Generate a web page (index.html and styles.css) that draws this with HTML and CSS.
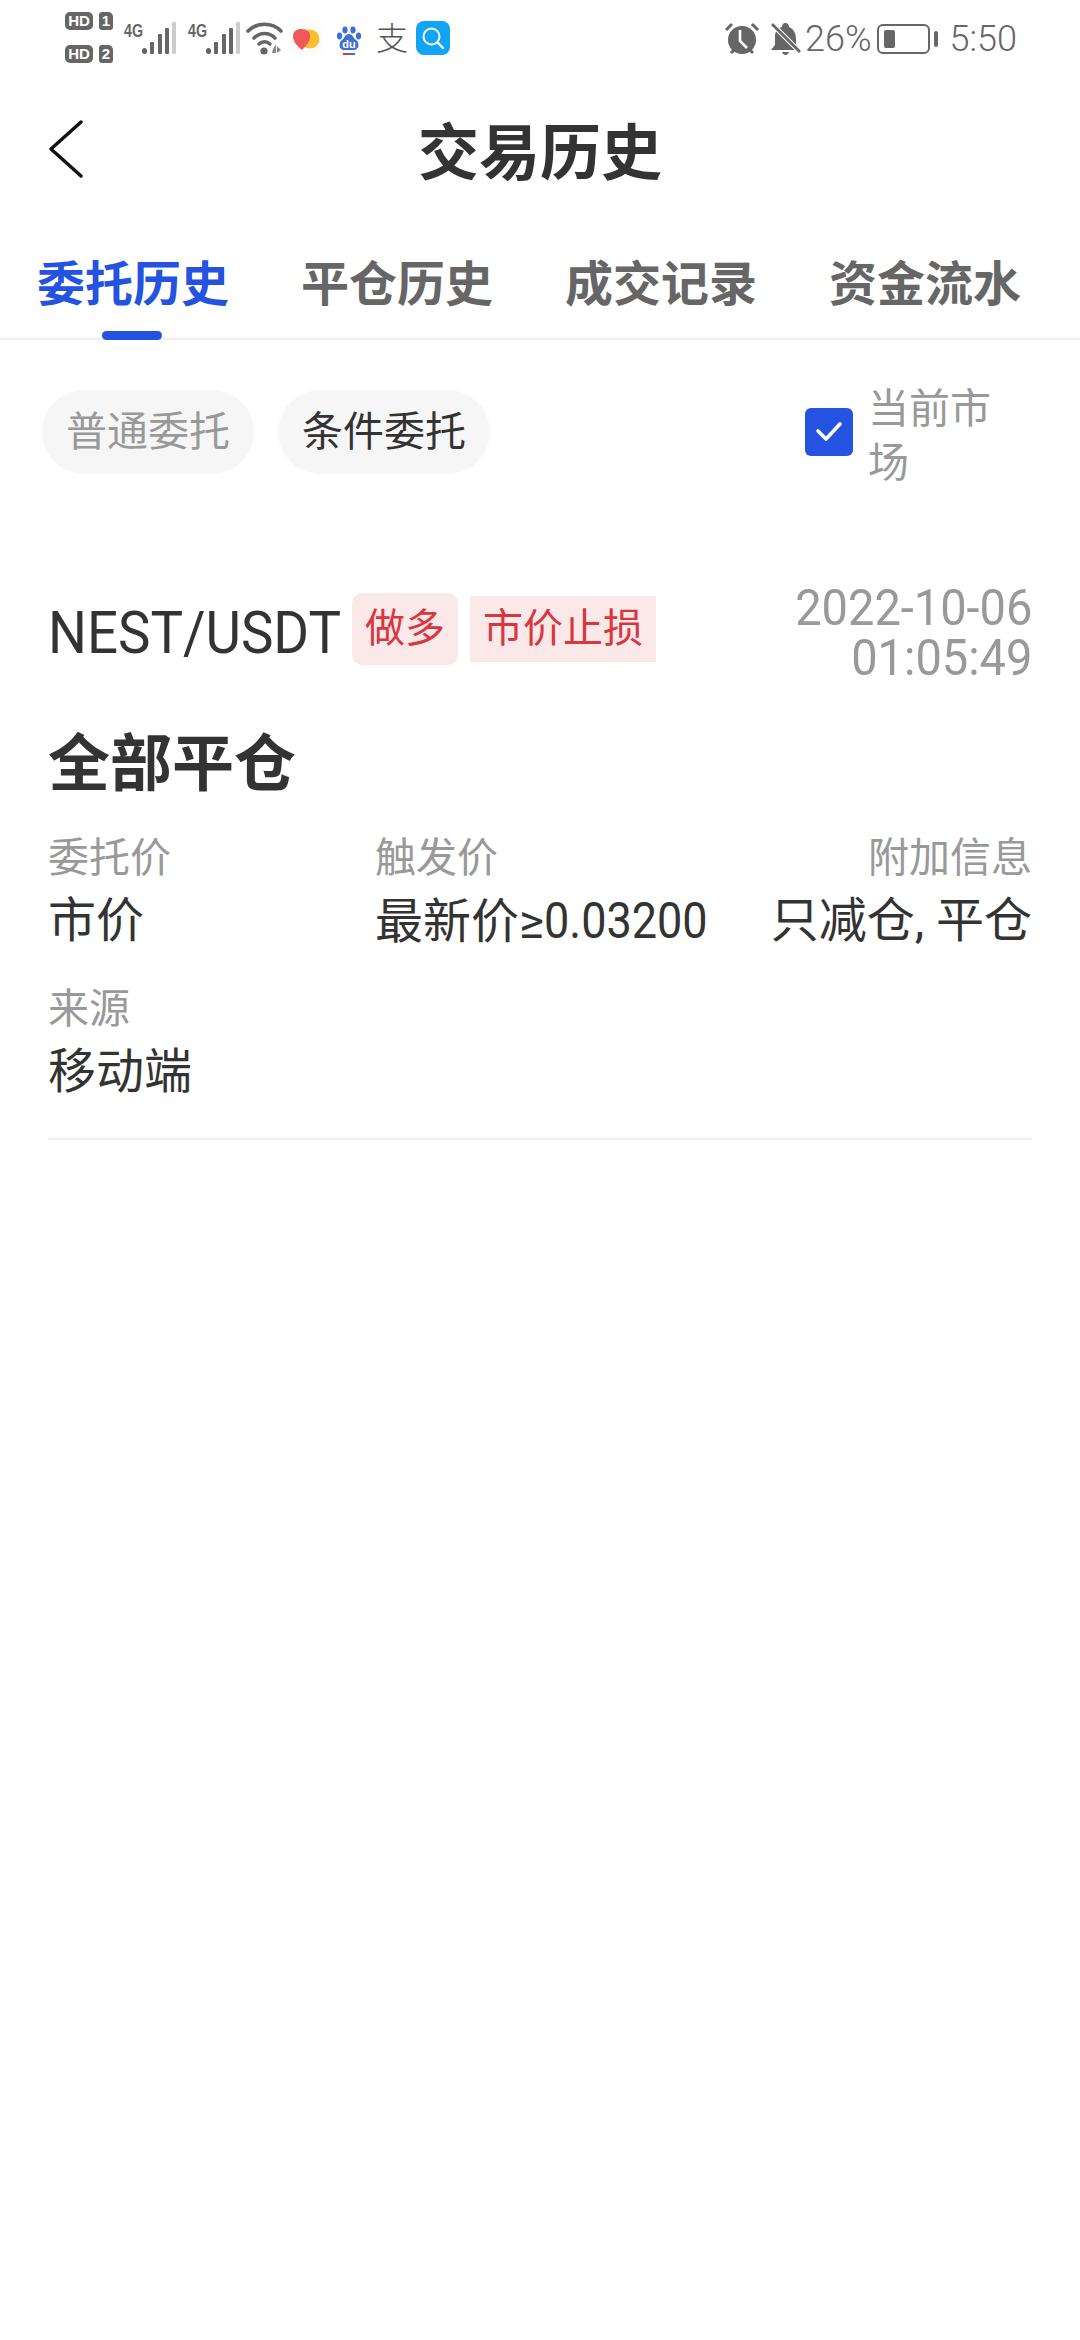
FILE: index.html
```html
<!DOCTYPE html>
<html>
<head>
    <title>交易历史</title>
    <link rel="stylesheet" href="styles.css">
</head>
<body>
    <div class="status-bar">
        <div class="status-left">
            <div class="sim-stack">
                <div class="sim-row"><span class="hd">HD</span><span class="sim-num">1</span></div>
                <div class="sim-row"><span class="hd">HD</span><span class="sim-num">2</span></div>
            </div>
            <div class="net">
                <span class="net-label">4G</span>
                <svg class="signal" width="36" height="34" viewBox="0 0 36 34">
                    <rect x="1" y="26" width="5" height="6" rx="2.5" fill="#666"/>
                    <rect x="9" y="20" width="4" height="12" rx="1" fill="#666"/>
                    <rect x="17" y="12" width="4" height="20" rx="1" fill="#666"/>
                    <rect x="24" y="6" width="4" height="26" rx="1" fill="#666"/>
                    <rect x="31" y="0" width="4" height="32" rx="1" fill="#ccc"/>
                </svg>
            </div>
            <div class="net">
                <span class="net-label">4G</span>
                <svg class="signal" width="36" height="34" viewBox="0 0 36 34">
                    <rect x="1" y="26" width="5" height="6" rx="2.5" fill="#666"/>
                    <rect x="9" y="20" width="4" height="12" rx="1" fill="#666"/>
                    <rect x="17" y="12" width="4" height="20" rx="1" fill="#666"/>
                    <rect x="24" y="6" width="4" height="26" rx="1" fill="#666"/>
                    <rect x="31" y="0" width="4" height="32" rx="1" fill="#ccc"/>
                </svg>
            </div>
            <svg class="wifi" width="40" height="34" viewBox="0 0 40 34">
                <path d="M2 9 C11 0 26 0 35 9" fill="none" stroke="#666" stroke-width="3.6" stroke-linecap="round"/>
                <path d="M8 16 C14 10 23 10 29 16" fill="none" stroke="#666" stroke-width="3.6" stroke-linecap="round"/>
                <path d="M13 22 C16 19 21 19 24 22" fill="none" stroke="#666" stroke-width="3.4" stroke-linecap="round"/>
                <circle cx="18" cy="29" r="3.6" fill="#666"/>
                <path d="M27 27 l3 -5 v9 h-4 z M31 24 l4 4 l-4 3z" fill="#888"/>
            </svg>
            <svg class="heart-app" width="32" height="28" viewBox="0 0 32 28">
                <rect x="0" y="0" width="32" height="28" rx="6" fill="#fbfbfb"/>
                <circle cx="20" cy="13" r="9.5" fill="#fbc02d"/>
                <path d="M12 24 C6 19 3 15 3 10 C3 5 7 3 11 3 C17 3 21 6 20 12 C19 17 15 21 12 24z" fill="#f2585b"/>
            </svg>
            <svg class="baidu" width="26" height="32" viewBox="0 0 26 32">
                <g fill="#3d6fd9">
                    <ellipse cx="3.5" cy="11" rx="2.6" ry="3.4"/>
                    <ellipse cx="9" cy="5" rx="2.6" ry="3.4"/>
                    <ellipse cx="17" cy="5" rx="2.6" ry="3.4"/>
                    <ellipse cx="22.5" cy="11" rx="2.6" ry="3.4"/>
                    <path d="M13 9 C17 9 17 13 20 15 C24 18 23 25 18 25 H8 C3 25 2 18 6 15 C9 13 9 9 13 9z"/>
                </g>
                <text x="13" y="23" class="baidu-text">du</text>
                <rect x="7" y="28" width="6" height="2" fill="#d9363e"/>
                <rect x="13" y="28" width="6" height="2" fill="#3d6fd9"/>
            </svg>
            <span class="zhi">支</span>
            <div class="search-app">
                <svg width="24" height="24" viewBox="0 0 24 24">
                    <circle cx="10.5" cy="10.5" r="8" fill="none" stroke="#fff" stroke-width="2"/>
                    <path d="M16.5 16.5 L22 22" stroke="#fff" stroke-width="2.4" stroke-linecap="round"/>
                </svg>
            </div>
        </div>
        <div class="status-right">
            <svg width="34" height="34" viewBox="0 0 34 34">
                <circle cx="17" cy="18" r="14" fill="#666"/>
                <path d="M1 8 L7 2 M33 8 L27 2" stroke="#666" stroke-width="3"/>
                <path d="M6 31 L9 28 M28 31 L25 28" stroke="#666" stroke-width="3"/>
                <path d="M15 8 V19 L22 26" fill="none" stroke="#fff" stroke-width="2.6"/>
            </svg>
            <svg class="bell" width="32" height="34" viewBox="0 0 32 34">
                <path d="M15 1 C18 1 19 3 19 5 C24 7 26 12 26 17 V22 L30 28 H1 L5 23 V14 C5 10 8 6 12 5 C12 3 13 1 15 1z" fill="#666"/>
                <path d="M12 30 H19 C18 34 13 34 12 30z" fill="#666"/>
                <path d="M3 3 L31 31" stroke="#fff" stroke-width="5"/>
                <path d="M2 2 L30 30" stroke="#666" stroke-width="2.6"/>
            </svg>
            <span class="battery-pct">26%</span>
            <div class="battery">
                <div class="battery-body"><div class="battery-level"></div></div>
                <div class="battery-nub"></div>
            </div>
            <span class="clock">5:50</span>
        </div>
    </div>

    <div class="header">
        <svg class="back" width="36" height="58" viewBox="0 0 36 60" preserveAspectRatio="none">
            <path d="M33 2 L3 30 L33 58" fill="none" stroke="#111" stroke-width="3.4" stroke-linecap="round" stroke-linejoin="round"/>
        </svg>
        <h1 class="title">交易历史</h1>
    </div>

    <div class="tabs">
        <div class="tab active">委托历史<span class="tab-line"></span></div>
        <div class="tab">平仓历史</div>
        <div class="tab">成交记录</div>
        <div class="tab">资金流水</div>
    </div>

    <div class="toolbar">
        <div class="pill muted">普通委托</div>
        <div class="pill">条件委托</div>
        <div class="market">
            <span class="checkbox">
                <svg width="28" height="24" viewBox="0 0 28 24">
                    <path d="M3 11 L11 19 L25 4" fill="none" stroke="#fff" stroke-width="3.6" stroke-linecap="round" stroke-linejoin="round"/>
                </svg>
            </span>
            <span class="market-label">当前市场</span>
        </div>
    </div>

    <div class="order">
        <div class="order-top">
            <span class="pair">NEST/USDT</span>
            <span class="tag tag-side">做多</span>
            <span class="tag">市价止损</span>
            <div class="order-time">2022-10-06<br>01:05:49</div>
        </div>
        <div class="order-type">全部平仓</div>
        <div class="details">
            <div class="cell">
                <div class="cell-label">委托价</div>
                <div class="cell-value">市价</div>
            </div>
            <div class="cell">
                <div class="cell-label">触发价</div>
                <div class="cell-value">最新价≥<span class="num">0.03200</span></div>
            </div>
            <div class="cell right">
                <div class="cell-label">附加信息</div>
                <div class="cell-value">只减仓, 平仓</div>
            </div>
            <div class="cell">
                <div class="cell-label">来源</div>
                <div class="cell-value">移动端</div>
            </div>
        </div>
    </div>
</body>
</html>
```

FILE: styles.css
```css
* { box-sizing: border-box; }
html, body { margin: 0; padding: 0; }
body { width: 1080px; height: 2340px; background: #fff; color: #333; font-family: Roboto, "Noto Sans CJK SC", sans-serif; overflow: hidden; }

.status-bar { height: 66px; padding: 12px 63px 0 65px; display: flex; justify-content: space-between; align-items: flex-start; color: #666; }
.status-left { display: flex; align-items: flex-start; }
.status-right { display: flex; align-items: center; height: 52px; gap: 10px; padding-top: 2px; }

.sim-stack { display: flex; flex-direction: column; gap: 15px; }
.sim-row { display: flex; gap: 6px; }
.hd { width: 28px; height: 18px; border-radius: 5px; background: #666; color: #fff; font: bold 15px/18px "Liberation Sans", sans-serif; text-align: center; }
.sim-num { width: 14px; height: 18px; border-radius: 3px 5px 3px 3px; background: #666; color: #fff; font: bold 15px/18px "Liberation Sans", sans-serif; text-align: center; }

.net { display: flex; align-items: flex-start; margin-left: 11px; margin-top: 10px; }
.net-label { font: bold 19px/18px "Liberation Sans", sans-serif; color: #666; transform: scaleX(.75); transform-origin: left; width: 16px; }
.signal { display: block; margin-left: 1px; }
.wifi { margin: 10px 0 0 5px; }
.heart-app { margin: 14px 0 0 4px; }
.baidu { margin: 13px 0 0 14px; }
.baidu-text { font: bold 11px "Liberation Sans", sans-serif; fill: #fff; text-anchor: middle; }
.zhi { margin: 4px 0 0 14px; font-size: 32px; font-weight: 300; line-height: 46px; color: #555; }
.search-app { margin: 9px 0 0 8px; width: 34px; height: 34px; border-radius: 8px; background: #12a5f5; display: flex; align-items: center; justify-content: center; }

.bell { margin-left: 1px; }
.battery-pct { font-size: 36px; font-weight: 300; line-height: 40px; margin-left: -7px; }
.battery { display: flex; align-items: center; gap: 4px; margin-left: -5px; }
.battery-body { width: 53px; height: 30px; border: 2px solid #666; border-radius: 6px; padding: 4px 5px; }
.battery-level { width: 11px; height: 100%; background: #666; border-radius: 2px; }
.battery-nub { width: 4px; height: 16px; border-radius: 2px; background: #666; }
.clock { font-size: 36px; font-weight: 300; line-height: 40px; margin-left: 2px; }

.header { height: 175px; padding: 0 48px; display: grid; grid-template-columns: 1fr auto 1fr; align-items: center; }
.back { display: block; margin-bottom: 9px; }
.title { grid-column: 2; margin: 0; font-size: 61px; font-weight: 700; color: #333; line-height: 72px; }

.tabs { height: 99px; padding: 0 37px; display: flex; gap: 72px; border-bottom: 2px solid #eee; }
.tab { position: relative; font-size: 48px; font-weight: 700; line-height: 88px; color: #666; white-space: nowrap; }
.tab.active { color: #2353e0; }
.tab-line { position: absolute; left: 65px; bottom: -2px; width: 60px; height: 9px; border-radius: 5px; background: #2353e0; }

.toolbar { padding: 34px 42px 0; display: flex; align-items: center; gap: 24px; }
.pill { height: 84px; padding: 0 24px; border-radius: 42px; background: #f6f6f6; font-size: 41px; line-height: 84px; color: #333; }
.pill.muted { color: #999; }
.market { margin-left: auto; display: flex; align-items: center; gap: 15px; width: 233px; }
.checkbox { flex: none; width: 48px; height: 48px; border-radius: 6px; background: #2353e0; display: flex; align-items: center; justify-content: center; }
.market-label { width: 130px; margin-top: 8px; font-size: 41px; line-height: 54px; color: #999; }

.order { margin: 0 48px; padding: 93px 0 33px; border-bottom: 2px solid #eee; }
.order-top { display: flex; align-items: center; }
.pair { display: inline-block; width: 290px; font-size: 60px; line-height: 64px; color: #333; white-space: nowrap; transform: scaleX(.91); transform-origin: left; }
.tag { margin: 0 0 8px 12px; padding: 0 13px; height: 66px; background: #fbe9ea; color: #d9363e; font-size: 40px; line-height: 66px; }
.tag-side { height: 72px; line-height: 72px; border-radius: 10px; margin-left: 14px; }
.order-time { margin-left: auto; text-align: right; font-size: 50px; line-height: 50px; color: #999; transform: scaleX(.94); transform-origin: right; }

.order-type { margin-top: 40px; font-size: 62px; font-weight: 700; line-height: 84px; color: #333; }
.details { margin-top: 23px; display: grid; grid-template-columns: 327px 1fr auto; row-gap: 26px; }
.cell-label { font-size: 41px; line-height: 56px; color: #999; }
.cell-value { margin-top: 2px; font-size: 48px; line-height: 66px; color: #333; white-space: nowrap; }
.right { text-align: right; }
.num { display: inline-block; width: 161px; font-size: 50px; text-align: left; transform: scaleX(.9); transform-origin: left; }
```
